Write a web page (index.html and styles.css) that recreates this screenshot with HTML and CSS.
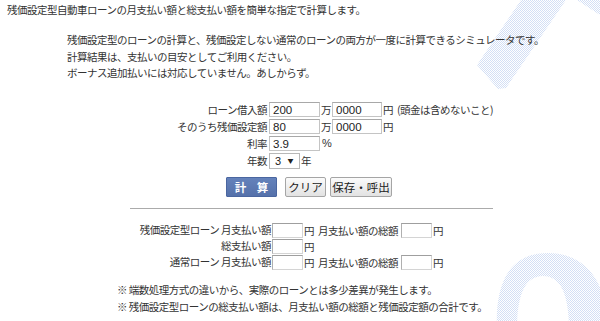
FILE: index.html
```html
<!DOCTYPE html>
<html lang="ja">
<head>
<meta charset="utf-8">
<title>残価設定型自動車ローン計算</title>
<link rel="stylesheet" href="styles.css">
</head>
<body>
<svg class="watermark" width="600" height="321" viewBox="0 0 600 321" aria-hidden="true">
  <defs>
    <pattern id="chk" width="2" height="2" patternUnits="userSpaceOnUse">
      <rect x="0" y="0" width="1" height="1" fill="#d3dff5"/>
      <rect x="1" y="1" width="1" height="1" fill="#d3dff5"/>
    </pattern>
  </defs>
  <polygon points="477,65 521,0 566,0 506,88 498,89" fill="url(#chk)"/>
  <polygon points="577,0 600,0 600,15" fill="url(#chk)"/>
  <path d="M548,253 C590,253 610,290 605,330 L497,330 C495,290 505,253 548,253 Z M543,276 C525,276 517,295 517,330 L569,330 C569,295 561,276 543,276 Z" fill="url(#chk)" fill-rule="evenodd"/>
</svg>

<main class="page">
  <h1 class="title">残価設定型自動車ローンの月支払い額と総支払い額を簡単な指定で計算します。</h1>

  <div class="intro">
    <p>残価設定型のローンの計算と、残価設定しない通常のローンの両方が一度に計算できるシミュレータです。</p>
    <p>計算結果は、支払いの目安としてご利用ください。</p>
    <p>ボーナス追加払いには対応していません。あしからず。</p>
  </div>

  <form class="form">
    <label class="lbl" for="kari">ローン借入額</label>
    <div class="field">
      <input id="kari" class="num" type="text" value="200"><span class="unit">万</span><input class="num num2" type="text" value="0000"><span class="unit">円</span><span class="note">(頭金は含めないこと)</span>
    </div>

    <label class="lbl" for="zan">そのうち残価設定額</label>
    <div class="field">
      <input id="zan" class="num" type="text" value="80"><span class="unit">万</span><input class="num num2" type="text" value="0000"><span class="unit">円</span>
    </div>

    <label class="lbl" for="rate">利率</label>
    <div class="field">
      <input id="rate" class="num" type="text" value="3.9"><span class="unit pct">%</span>
    </div>

    <label class="lbl" for="years">年数</label>
    <div class="field">
      <span class="selwrap"><select id="years" class="sel"><option>3</option><option>4</option><option>5</option></select></span><span class="unit">年</span>
    </div>
  </form>

  <div class="buttons">
    <button type="button" class="btn btn-calc">計 算</button>
    <button type="button" class="btn btn-sub btn-clear">クリア</button>
    <button type="button" class="btn btn-sub">保存・呼出</button>
  </div>

  <hr class="rule">

  <div class="results">
    <span class="rlbl">残価設定型ローン 月支払い額</span>
    <div class="rfield"><span class="box"></span><span class="unit">円</span><span class="sub">月支払い額の総額</span><span class="box"></span><span class="unit">円</span></div>

    <span class="rlbl">総支払い額</span>
    <div class="rfield"><span class="box"></span><span class="unit">円</span></div>

    <span class="rlbl">通常ローン 月支払い額</span>
    <div class="rfield"><span class="box"></span><span class="unit">円</span><span class="sub">月支払い額の総額</span><span class="box"></span><span class="unit">円</span></div>
  </div>

  <ul class="notes">
    <li>※ 端数処理方式の違いから、実際のローンとは多少差異が発生します。</li>
    <li>※ 残価設定型ローンの総支払い額は、月支払い額の総額と残価設定額の合計です。</li>
  </ul>
</main>
</body>
</html>
```

FILE: styles.css
```css
html, body {
  margin: 0;
  padding: 0;
  background: #fff;
}

body {
  position: relative;
  width: 600px;
  height: 321px;
  overflow: hidden;
  font-family: "Noto Sans CJK JP", "Noto Sans", sans-serif;
  font-size: 10.5px;
  letter-spacing: -0.5px;
  color: #333;
}

.watermark {
  position: absolute;
  left: 0;
  top: 0;
  z-index: 0;
  pointer-events: none;
}

.page {
  position: relative;
  z-index: 1;
}

.title {
  margin: 0;
  padding: 3px 0 0 7px;
  font-size: 10.5px;
  font-weight: normal;
  line-height: 14px;
}

.intro {
  margin: 15px 0 0 67px;
  line-height: 16.5px;
}

.intro p {
  margin: 0;
}

.form {
  display: grid;
  grid-template-columns: 269px 1fr;
  grid-auto-rows: 17px;
  margin-top: 19.5px;
}

.lbl {
  text-align: right;
  padding-right: 2px;
  line-height: 17px;
}

.field {
  display: flex;
  align-items: center;
}

.num {
  box-sizing: border-box;
  width: 51px;
  height: 15px;
  margin: 0;
  padding: 0 3px;
  border: 1px solid #c4c4c4;
  border-top-color: #a8a8a8;
  font-family: "Liberation Sans", Arial, sans-serif;
  font-size: 11.5px;
  letter-spacing: 0;
  color: #222;
  background: #fff;
}

.num2 {
  width: 50px;
}

.unit {
  margin: 0 1px;
  line-height: 17px;
}

.pct {
  font-family: "Liberation Sans", Arial, sans-serif;
  font-size: 11px;
  letter-spacing: 0;
  margin-left: 2px;
}

.note {
  margin-left: 3px;
}

.selwrap {
  position: relative;
  display: inline-block;
  width: 31px;
  height: 16px;
}

.selwrap::after {
  content: "▼";
  position: absolute;
  right: 7px;
  top: 4px;
  font-size: 6px;
  line-height: 8px;
  color: #222;
  pointer-events: none;
}

.sel {
  -webkit-appearance: none;
  appearance: none;
  box-sizing: border-box;
  width: 31px;
  height: 16px;
  margin: 0;
  padding: 0 0 0 5px;
  border: 1px solid #b8b8b8;
  border-radius: 0;
  background: #fff;
  font-family: "Liberation Sans", Arial, sans-serif;
  font-size: 11px;
  letter-spacing: 0;
  color: #222;
}

.buttons {
  display: flex;
  margin: 8px 0 0 226px;
  gap: 4px;
}

.btn {
  box-sizing: border-box;
  height: 20px;
  margin: 0;
  padding: 0;
  font-family: "Noto Sans CJK JP", sans-serif;
  font-size: 11.5px;
  line-height: 18px;
  white-space: nowrap;
  cursor: pointer;
}

.btn-calc {
  width: 51px;
  margin-right: 4px;
  border: 1px solid #4a66a0;
  border-radius: 1px;
  background: linear-gradient(#6482bb, #5571aa);
  color: #fff;
  font-weight: bold;
  letter-spacing: 4px;
  text-indent: 4px;
}

.btn-sub {
  width: 62px;
  border: 1px solid #a5a5a5;
  border-radius: 2px;
  background: linear-gradient(#fbfbfb, #e2e2e2);
  color: #222;
  letter-spacing: 0;
}

.btn-clear {
  width: 41px;
}

.rule {
  margin: 11px 0 0 130px;
  width: 363px;
  height: 0;
  border: 0;
  border-top: 1px solid #ababab;
}

.results {
  display: grid;
  grid-template-columns: 272px 1fr;
  grid-auto-rows: 16px;
  margin-top: 13px;
}

.rlbl {
  text-align: right;
  padding-right: 1px;
  line-height: 16px;
}

.rfield {
  display: flex;
  align-items: center;
}

.box {
  box-sizing: border-box;
  display: inline-block;
  width: 31px;
  height: 15px;
  border: 1px solid #d4d4d4;
  border-top-color: #9f9f9f;
  border-left-color: #b0b0b0;
  background: #fff;
}

.sub {
  margin: 0 3px 0 3px;
}

.notes {
  list-style: none;
  margin: 10.5px 0 0 117px;
  padding: 0;
  line-height: 17px;
}
```
